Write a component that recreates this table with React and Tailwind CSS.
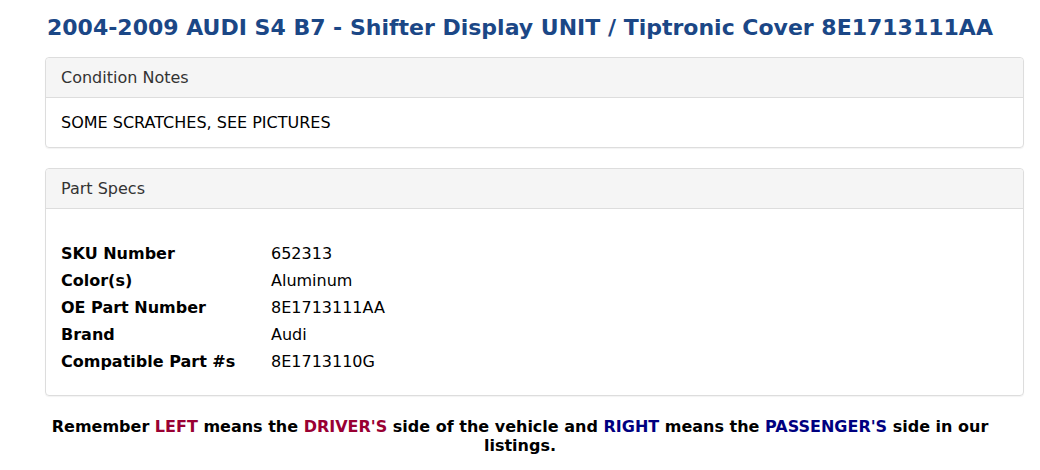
export default function App() {
  const specs = [
    ["SKU Number", "652313"],
    ["Color(s)", "Aluminum"],
    ["OE Part Number", "8E1713111AA"],
    ["Brand", "Audi"],
    ["Compatible Part #s", "8E1713110G"],
  ];

  return (
    <main className="min-h-screen bg-white font-['DejaVu_Sans',sans-serif] text-[16px] text-black">
      <div className="pl-[45px] pr-[16px]">
        <h1 className="pl-[2px] pt-[15px] pb-[16px] text-[22px] font-bold leading-[26px] text-[#1b4786]">
          2004-2009 AUDI S4 B7 - Shifter Display UNIT / Tiptronic Cover 8E1713111AA
        </h1>

        <section className="rounded-[4px] border border-[#dddddd] shadow-[0_1px_1px_rgba(0,0,0,0.05)]">
          <div className="rounded-t-[4px] border-b border-[#dddddd] bg-[#f5f5f5] px-[15px] py-[9px] leading-[21px] text-[#333333]">
            Condition Notes
          </div>
          <div className="px-[15px] py-[15px] leading-[19px]">SOME SCRATCHES, SEE PICTURES</div>
        </section>

        <section className="mt-[20px] rounded-[4px] border border-[#dddddd] shadow-[0_1px_1px_rgba(0,0,0,0.05)]">
          <div className="rounded-t-[4px] border-b border-[#dddddd] bg-[#f5f5f5] px-[15px] py-[9px] leading-[21px] text-[#333333]">
            Part Specs
          </div>
          <div className="px-[15px] pt-[31px] pb-[20px]">
            {specs.map(([label, value]) => (
              <div key={label} className="flex leading-[27px]">
                <div className="w-[210px] font-bold">{label}</div>
                <div>{value}</div>
              </div>
            ))}
          </div>
        </section>
      </div>

      <p className="px-[15px] pt-[21px] text-center font-bold leading-[19px]">
        Remember <span className="text-[#990033]">LEFT</span> means the{" "}
        <span className="text-[#990033]">DRIVER'S</span> side of the vehicle and{" "}
        <span className="text-[#000080]">RIGHT</span> means the{" "}
        <span className="text-[#000080]">PASSENGER'S</span> side in our listings.
      </p>
    </main>
  );
}
